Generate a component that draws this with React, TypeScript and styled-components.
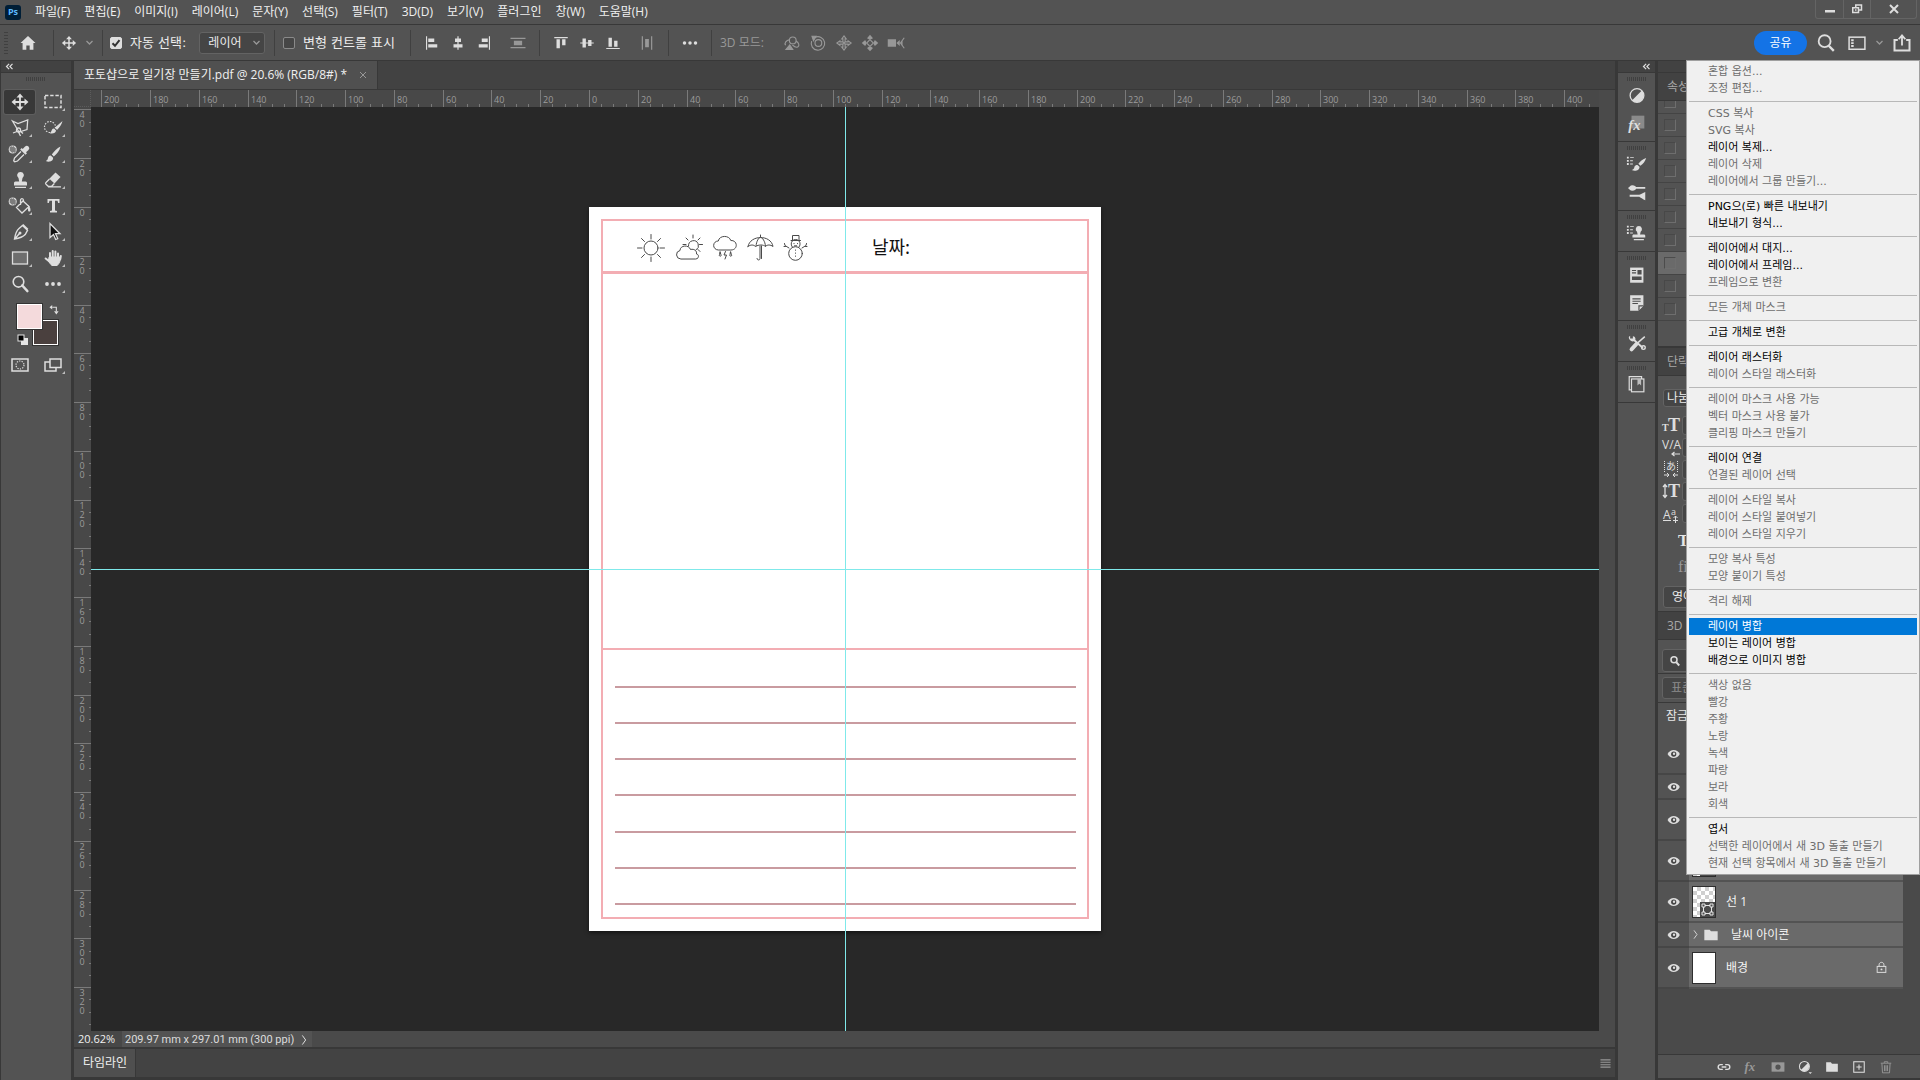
import React from "react";
import styled, { createGlobalStyle, css } from "styled-components";

const uiFont = `"Open Sans", "Noto Sans CJK KR", sans-serif`;
const systemFont = `"DejaVu Sans", "Noto Sans CJK KR", sans-serif`;

const color = {
  panel: "#535353",
  strip: "#424242",
  edge: "#383838",
  track: "#4a4a4a",
  canvas: "#282828",
  icon: "#dedede",
  dim: "#989898",
  row: "#6a6a6a",
  pink: "#f3adb3",
};

const GlobalStyle = createGlobalStyle`
  *, *::before, *::after { box-sizing: border-box; }
  body { margin: 0; background: ${color.panel}; overflow: hidden; }
  button, input, select { font: inherit; color: inherit; margin: 0; }
  ul { list-style: none; margin: 0; padding: 0; }
`;

const Shell = styled.div`
  display: flex;
  flex-direction: column;
  height: 100vh;
  background: ${color.panel};
  color: #e6e6e6;
  font: 12px/16px ${uiFont};
`;

const plainButton = css`
  display: flex;
  align-items: center;
  justify-content: center;
  padding: 0;
  border: 0;
  background: none;
`;

const Svg = styled.svg<{ $size: number; $dim?: boolean }>`
  display: block;
  flex: none;
  width: ${(p) => p.$size}px;
  height: ${(p) => p.$size}px;
  color: ${(p) => (p.$dim ? color.dim : color.icon)};
  fill: none;
  stroke: none;
`;

/* ---------- icons, all on a 24 unit grid ---------- */

const line = { stroke: "currentColor", strokeWidth: 1.5, fill: "none" } as const;
const solid = { fill: "currentColor" } as const;

const Checker = () => (
  <g>
    <circle cx="4.7" cy="7.5" r="4" fill="currentColor" />
    <path
      d="M2.7 4.5h1v1h-1zM4.7 4.5h1v1h-1zM3.7 5.5h1v1h-1zM5.7 5.5h1v1h-1zM1.7 5.5h1v1h-1zM2.7 6.5h1v1h-1zM4.7 6.5h1v1h-1zM6.7 6.5h1v1h-1zM3.7 7.5h1v1h-1zM5.7 7.5h1v1h-1zM1.7 7.5h1v1h-1zM2.7 8.5h1v1h-1zM4.7 8.5h1v1h-1zM6.7 8.5h1v1h-1zM3.7 9.5h1v1h-1zM5.7 9.5h1v1h-1z"
      fill="#1c1c1c"
    />
  </g>
);

const Bullets = () => (
  <path d="M1 4h2v2H1zM4.500 4.500h4v1h-4zM1 7.500h2v2H1zM4.500 8h3v1h-3zM1 11h2v2H1zM4.500 11.500h3v1h-3z" {...solid} />
);

const icons: Record<string, React.ReactNode> = {
  move: (
    <g>
      <path d="M12 5v14M5 12h14" {...line} strokeWidth={1.8} />
      <path d="M12 3.500l3.500 4h-7zM12 20.500l3.500-4h-7zM3.500 12l4-3.500v7zM20.500 12l-4-3.500v7z" {...solid} />
    </g>
  ),
  marquee: <rect x="4" y="5.500" width="16" height="12" {...line} strokeDasharray="3.400 1.800" />,
  lasso: (
    <g {...line} strokeWidth={1.3}>
      <path d="M4.500 5l5.500 2.500L19.700 4 19 13.500l-8 2.500z" />
      <circle cx="10.500" cy="14" r="2" />
      <path d="M9 15.500l-4 1.500M10.500 16l2 4M12 15l3 2.500" />
    </g>
  ),
  quickSelect: (
    <g>
      <circle cx="9" cy="11" r="5.500" {...line} strokeWidth={1.2} strokeDasharray="1.500 1.300" />
      <path d="M21.500 5l-7.500 6.500 2 2.500c2.500-2.500 4.500-5 5.500-9zM13 12.500c-2 0-2.300 1.800-2.600 2.800-.2.900-.9 1.400-1.900 1.700 2.500 1.300 6.500.2 6.500-2.500z" {...solid} />
    </g>
  ),
  eyedropper: (
    <g>
      <Checker />
      <path d="M20.500 4.500a2.400 2.400 0 0 0-3.400 0L14.700 7l-1-1-1.500 1.500 5.300 5.300 1.500-1.500-1-1 2.500-2.400a2.400 2.400 0 0 0 0-3.400z" {...solid} />
      <path d="M13 9.500l-6.500 6.500-.8 2.800 1 1 2.800-.8 6.500-6.500" {...line} strokeWidth={1.3} />
    </g>
  ),
  brush: (
    <path d="M19.500 4.500c-3.500 1.500-6.500 5-8.700 8l2 2c3-2.300 5.700-5.500 6.700-10zM9.800 13.500c-2.300 0-2.700 1.800-3 3.300-.2 1-.9 1.700-2 2.200 3 1.500 7.500.3 7.300-3.300z" {...solid} />
  ),
  stamp: (
    <path d="M12.500 4a3.300 3.300 0 0 0-2 6l.7 3.500H7.500c-1 0-1.500.8-1.500 1.500v2.500h13V15c0-.7-.5-1.500-1.500-1.500h-3.700l.7-3.500a3.300 3.300 0 0 0-2-6zM7 18.700h11V20H7z" {...solid} />
  ),
  eraser: (
    <g>
      <path d="M14.500 4.500l5 4.500-6 6.500-5.200-4.700z" {...solid} />
      <path d="M8.500 11l-3.500 3.500c-.6.600-.6 1.200 0 1.800L7.500 18.500h3L13.300 15.500M7 18.900h13" {...line} strokeWidth={1.3} />
    </g>
  ),
  bucket: (
    <g>
      <Checker />
      <path d="M8.500 13.500L15 7l6 5.500-7 6.500zM12.500 11V6.500c0-2.500 3-2.500 3 0V8" {...line} strokeWidth={1.3} />
      <path d="M20 11c1.500 1 2.500 3 2.500 5s-2.500 2-2.500 0z" {...solid} />
    </g>
  ),
  type: <path d="M6.500 5h12v4h-1.300l-.7-2.300h-2.500v9.800l2 .5v1.500H9V17l2-.5V6.700H8.500L7.800 9H6.500z" {...solid} />,
  pen: (
    <g>
      <path d="M14.500 5.500l5 4.800-2.300 4.200c-2.500 2.700-5.700 3.700-10.700 4.500.8-5 1.800-8.200 4.500-10.500zM6.500 19l5-5.500" {...line} strokeWidth={1.4} />
      <circle cx="12" cy="13" r="1.500" {...solid} />
      <path d="M15.300 4l5 4.800-1.200 1.400-5-4.800z" {...solid} />
    </g>
  ),
  pathSelect: <path d="M9 3.500v14l3.500-3 2.200 5 2-.9-2.200-4.900h4.500z" fill="#101010" stroke="currentColor" strokeWidth="1.300" />,
  rectangle: <rect x="4.500" y="6" width="15" height="12" fill="#6e6e6e" stroke="currentColor" strokeWidth="1.300" />,
  hand: (
    <g stroke="currentColor" strokeLinecap="round" fill="currentColor">
      <path d="M9 12V7M11.700 11V5M14.400 11V5.500M17 12.500V7.500M19.300 13l.5-3M9 16l-4.300-3.500" strokeWidth="2" />
      <path d="M8.500 11h10.300l.5 3c-.8 3-2.300 5-3.300 5.500h-5c-2-1.500-2.500-3-3.500-4.500z" strokeWidth="1" />
    </g>
  ),
  zoom: (
    <g>
      <circle cx="10.500" cy="9.800" r="5.300" {...line} strokeWidth={1.600} />
      <path d="M14.300 13.500l5 5.500" stroke="currentColor" strokeWidth="2.600" strokeLinecap="round" />
    </g>
  ),
  dots: (
    <g {...solid}>
      <circle cx="6" cy="12" r="1.900" />
      <circle cx="12" cy="12" r="1.900" />
      <circle cx="18" cy="12" r="1.900" />
    </g>
  ),
  quickMask: (
    <g>
      <rect x="4" y="6" width="16" height="12" {...line} />
      <circle cx="12" cy="12" r="4" {...line} strokeWidth={1.200} strokeDasharray="1.300 1.200" />
    </g>
  ),
  screenMode: (
    <g {...line}>
      <path d="M9 9H4v9h11v-3" />
      <rect x="9" y="6" width="11" height="8.500" />
    </g>
  ),
  home: <path d="M12 3.500L3 12h2.500v8H10v-5h4v5h4.500v-8H21z" {...solid} />,
  chevronDown: <path d="M4 8l8 8 8-8" {...line} strokeWidth={3.400} />,
  alignLeft: <path d="M4 3h1.500v18H4zM7 6h8v4.500H7zM7 13.500h12V18H7z" {...solid} />,
  alignCenter: <path d="M11.200 3h1.600v3H16v4.500h-3.200v3H18V18h-5.200v3h-1.600v-3H6v-4.500h5.200v-3H8V6h3.200z" {...solid} />,
  alignRight: <path d="M18.500 3H20v18h-1.500zM9 6h8v4.500H9zM5 13.500h12V18H5z" {...solid} />,
  distributeV: <path d="M2 5h20v1.600H2zM2 17.400h20V19H2zM6.500 9h11v6h-11z" {...solid} />,
  alignTop: <path d="M3 4h18v1.500H3zM6 7h4.500v12H6zM13.500 7H18v8h-4.500z" {...solid} />,
  alignMiddle: <path d="M3 11.200h3V6h4.500v5.200h3V8H18v3.200h3v1.600h-3V16h-4.500v-3.200h-3V18H6v-5.200H3z" {...solid} />,
  alignBottom: <path d="M3 18.500h18V20H3zM6 5h4.500v12H6zM13.500 9H18v8h-4.500z" {...solid} />,
  distributeH: <path d="M5 3h1.600v18H5zM17.400 3H19v18h-1.600zM9.500 6.500h5v11h-5z" {...solid} />,
  orbit: (
    <g {...line}>
      <circle cx="13" cy="8.500" r="4.500" />
      <path d="M9 7.500c-5 1-7.500 4.500-5.500 7.500M17.500 9.500c4 2 4.500 6 2.500 7.500-2 1.300-5 0-7.500-2.500" />
      <path d="M4 20.500h9l-4-6z" {...solid} />
    </g>
  ),
  roll: (
    <g {...line}>
      <circle cx="12.500" cy="12" r="4.500" />
      <path d="M8 4.500a9 9 0 1 1-4.500 5" />
      <path d="M4 3l5.500 0-3.500 6z" {...solid} />
    </g>
  ),
  pan3d: (
    <g {...line}>
      <path d="M12 2.500l3 4h-1.500v4h4V9l4 3-4 3v-1.500h-4v4H15l-3 4-3-4h1.500v-4h-4V15l-4-3 4-3v1.500h4v-4H9z" />
      <path d="M10.500 10.500l3 3M13.500 10.500l-3 3" />
    </g>
  ),
  slide3d: (
    <g>
      <path d="M12 7.500L16.500 12 12 16.500 7.500 12z" {...line} />
      <path d="M12 1l4 4.500-2.500 1.500h-3L8 5.500zM12 23l4-4.500-2.500-1.500h-3L8 18.500zM1 12l4.500-4L7 10.500v3L5.500 16zM23 12l-4.500-4L17 10.500v3l1.500 2.500z" {...solid} />
    </g>
  ),
  camera3d: (
    <g>
      <path d="M1 7h11v10H1zM12.500 12L17 8v8z" {...solid} />
      <path d="M23 5l-5 7 5 7M20 8.500v7" {...line} />
    </g>
  ),
  search: (
    <g>
      <circle cx="10.500" cy="10" r="6.500" {...line} strokeWidth={2} />
      <path d="M15 15l5.500 5.500" stroke="currentColor" strokeWidth="2.600" />
    </g>
  ),
  workspace: (
    <g>
      <rect x="2.500" y="5" width="19" height="14.500" {...line} strokeWidth={1.800} />
      <path d="M5 7.500h3v2.300H5zM5 11h3v2.300H5zM5 14.500h3v2.300H5z" {...solid} />
    </g>
  ),
  exportUp: (
    <g>
      <path d="M7 8.500H3V21h18V8.500h-4" {...line} strokeWidth={2.400} />
      <path d="M12 15V4M8 7.500l4-4.500 4 4.500" {...line} strokeWidth={2.200} />
    </g>
  ),
  adjustments: (
    <g>
      <circle cx="12" cy="12.500" r="7.500" {...line} strokeWidth={1.400} />
      <path d="M17.300 7.200A7.500 7.500 0 0 1 6.700 17.800z" {...solid} />
    </g>
  ),
  styles: (
    <g>
      <rect x="6" y="4" width="14" height="14" fill="#8a8a8a" />
      <text x="2.500" y="20" fontFamily="Liberation Serif, serif" fontStyle="italic" fontWeight="bold" fontSize="16" fill="currentColor">
        fx
      </text>
    </g>
  ),
  brushSettings: (
    <g>
      <Bullets />
      <path d="M22 5.500c-3.500 1-6.500 3.700-8.500 6.300l2.200 2.200c3-2 5.300-5 6.300-8.500zM12.500 13c-3 0-3.200 2-3.700 3.500-.4 1-1.300 1.500-2.600 2 3.500 2 8.800.5 8.500-3.500z" {...solid} />
    </g>
  ),
  brushes: (
    <path d="M2 7.500c1.500-.5 2.500-3 5-3s3.500 1.200 4 2h10v2H11c-.5 1-1.500 2-4 2s-3.500-2-5-3zM4 15h10.500c2-.5 4-2 6.500-3v9c-2.500-1-4.500-2.500-6.500-3.800H4z" {...solid} />
  ),
  cloneSource: (
    <g>
      <Bullets />
      <path d="M14 4.500a3.300 3.300 0 0 0-2 6l.7 3H8.500c-1 0-1.500.7-1.500 1.400v2.100h14v-2.100c0-.7-.5-1.400-1.500-1.400h-4.200l.7-3a3.300 3.300 0 0 0-2-6zM8.500 18.500h11v1.400h-11z" {...solid} />
    </g>
  ),
  libraries: (
    <g>
      <rect x="4.500" y="5" width="14.500" height="16.500" {...solid} />
      <path d="M6.500 7.500H11v1.300H6.500zM6.500 10.200H11v1.300H6.500zM12.500 7.500H17v5h-4.500zM6.500 14.800H17v3.700H6.500z" fill="#4f4f4f" />
    </g>
  ),
  notes: (
    <g>
      <path d="M4.500 4.500H19V16l-5.500 5.500h-9z" {...solid} />
      <path d="M7 8h9v1.200H7zM7 10.500h9v1.200H7zM7 13h6v1.200H7zM13.500 21.500v-6h6z" fill="#4f4f4f" />
      <path d="M14.800 20.500v-3.700h3.700z" {...solid} />
    </g>
  ),
  toolPresets: (
    <g>
      <path d="M8.500 8.500l10 9" {...line} strokeWidth={2} />
      <circle cx="19" cy="17" r="2" {...line} strokeWidth={1.500} />
      <path d="M3 5.500l1.500-1.500v3h3V4.500c2 0 3 1.500 2.800 3.500-.3 1.500-1.500 2.300-3 2.300C5 10.300 3 8 3 5.500z" {...solid} />
      <path d="M20.500 5l-9 8" {...line} strokeWidth={1.600} />
      <path d="M11.500 13l-5.500 6" stroke="currentColor" strokeWidth="4.200" strokeLinecap="round" />
    </g>
  ),
  book: (
    <g>
      <path d="M6 18.500H3.500V4H17v2.500" {...line} strokeWidth={1.300} />
      <rect x="6" y="6.500" width="13.500" height="14" {...line} strokeWidth={1.300} />
      <path d="M12.500 6.500h4v7l-2-1.800-2 1.800z" fill="#bdbdbd" />
    </g>
  ),
  eye: (
    <g>
      <path d="M1 12c4.500-9 16.500-9 21 0-4.500 9-16.500 9-21 0z" {...solid} />
      <circle cx="11.500" cy="12" r="4.500" fill="#454545" />
      <circle cx="12" cy="11.500" r="2" {...solid} />
    </g>
  ),
  folder: <path d="M2 4h8l2 2.500h10V20H2z" {...solid} />,
  chevronRight: <path d="M8 1l8 11-8 11" {...line} strokeWidth={2.400} />,
  lock: (
    <g>
      <rect x="4" y="10" width="16" height="11" {...line} strokeWidth={1.800} />
      <path d="M7.500 10V7c0-6 9-6 9 0v3" {...line} strokeWidth={1.800} />
      <circle cx="12" cy="15.500" r="1.800" {...solid} />
    </g>
  ),
  link: (
    <g {...line} strokeWidth={2.400}>
      <path d="M10 8H6a4 4 0 0 0 0 8h4M14 8h4a4 4 0 0 1 0 8h-4M8 12h8" />
    </g>
  ),
  fx: (
    <text x="1" y="18" fontFamily="Liberation Serif, serif" fontStyle="italic" fontWeight="bold" fontSize="22" fill="currentColor">
      fx
    </text>
  ),
  mask: (
    <g>
      <rect x="1" y="4" width="22" height="16" {...solid} />
      <circle cx="12" cy="12" r="4.500" fill="#535353" />
    </g>
  ),
  adjust: (
    <g>
      <circle cx="11" cy="11" r="8.500" {...line} strokeWidth={1.800} />
      <path d="M17 5A8.500 8.500 0 0 1 5 17zM18 21h6l-3 3z" {...solid} />
    </g>
  ),
  plusBox: (
    <g {...line} strokeWidth={1.800}>
      <rect x="3" y="3" width="18" height="18" />
      <path d="M12 7.500v9M7.500 12h9" />
    </g>
  ),
  trash: (
    <g {...line} strokeWidth={1.600}>
      <path d="M3 5.500h18M9 5V3h6v2M5 6l1 16h12l1-16M9.500 9v10M12 9v10M14.500 9v10" />
    </g>
  ),
  swap: (
    <g>
      <path d="M7 7h9v9" {...line} strokeWidth={2.400} />
      <path d="M1 7l6-5v10zM16 23l-5-7h10z" {...solid} />
    </g>
  ),
  searchBold: (
    <g>
      <circle cx="10" cy="9.500" r="6" {...line} strokeWidth={3} />
      <path d="M14.500 14.500l6 6.500" stroke="currentColor" strokeWidth="3.800" />
    </g>
  ),
  minimize: <path d="M2 14h20v5H2z" {...solid} />,
  restore: (
    <g {...line} strokeWidth={3}>
      <path d="M9.500 8V4H21v10h-5" />
      <path d="M3.500 9.500H15V19H3.500zM8 14h3" />
    </g>
  ),
  close: <path d="M4 4l16 16M20 4L4 20" {...line} strokeWidth={4} />,
  cross: <path d="M3 3l18 18M21 3L3 21" {...line} strokeWidth={3} />,
  collapse: <path d="M11 5l-7 7 7 7M20 5l-7 7 7 7" {...line} strokeWidth={3.200} />,
  burger: <path d="M1 4h22M1 9.300h22M1 14.600h22M1 20h22" {...line} strokeWidth={2.400} />,
};

const Icon = ({ name, size = 24, dim = false }: { name: string; size?: number; dim?: boolean }) => (
  <Svg $size={size} $dim={dim} viewBox="0 0 24 24" aria-hidden="true">
    {icons[name]}
  </Svg>
);

/* ---------- menu bar ---------- */

const MenuBar = styled.header`
  display: flex;
  flex: none;
  height: 25px;
  border-bottom: 1px solid ${color.edge};
`;

const Logo = styled.div`
  align-self: center;
  width: 16px;
  height: 15px;
  margin: 0 14px 0 5px;
  border-radius: 3px;
  background: #001e36;
  color: #5cb8ff;
  font: bold 9px/14px ${uiFont};
  text-align: center;
`;

const MenuNav = styled.nav`
  display: flex;
  flex: 1;
  gap: 14px;
`;

const MenuButton = styled.button`
  ${plainButton}
  color: #f0f0f0;
`;

const WindowControls = styled.div`
  display: flex;
  height: 19px;
  margin-right: 3px;
  border: 1px solid #646464;
  border-top: 0;
  border-radius: 0 0 3px 3px;
`;

const WindowButton = styled.button<{ $wide?: boolean }>`
  ${plainButton}
  width: ${(p) => (p.$wide ? 46 : 27)}px;
  & + & {
    border-left: 1px solid #646464;
  }
`;

const menus = ["파일(F)", "편집(E)", "이미지(I)", "레이어(L)", "문자(Y)", "선택(S)", "필터(T)", "3D(D)", "보기(V)", "플러그인", "창(W)", "도움말(H)"];

/* ---------- options bar ---------- */

const OptionsBar = styled.div`
  display: flex;
  flex: none;
  align-items: center;
  height: 36px;
  border-bottom: 1px solid ${color.edge};
`;

const OptionGroup = styled.div<{ $width: number; $gap?: number; $start?: number }>`
  display: flex;
  align-items: center;
  width: ${(p) => p.$width}px;
  height: 26px;
  padding-left: ${(p) => p.$start ?? 8}px;
  gap: ${(p) => p.$gap ?? 8}px;
  border-right: 1px solid #404040;
`;

const OptionTail = styled.div`
  display: flex;
  flex: 1;
  align-items: center;
  gap: 8px;
  padding: 0 8px;
  color: ${color.dim};
`;

const ModeIcons = styled.div`
  display: flex;
  gap: 8px;
  padding-left: 11px;
`;

const Grip = styled.div`
  width: 4px;
  height: 22px;
  background: repeating-linear-gradient(#404040 0 1px, transparent 1px 3px);
`;

const IconButton = styled.button<{ $after?: number }>`
  ${plainButton}
  margin-right: ${(p) => p.$after ?? 0}px;
`;

const CheckLabel = styled.label`
  display: flex;
  align-items: center;
  gap: 8px;
  color: #ececec;
  font: 13px/16px ${systemFont};
  white-space: nowrap;
`;

const CheckBox = styled.input`
  appearance: none;
  width: 12px;
  height: 12px;
  border: 1px solid #8a8a8a;
  border-radius: 2px;
  background: #464646;
  &:checked {
    border-color: #dedede;
    background: #dedede;
  }
`;

const CheckHolder = styled.span`
  display: grid;
  & > * {
    grid-area: 1 / 1;
  }
  & > svg {
    pointer-events: none;
    color: #333;
  }
`;

const SelectHolder = styled.span<{ $width: number }>`
  display: grid;
  align-items: center;
  width: ${(p) => p.$width}px;
  height: 22px;
  & > * {
    grid-area: 1 / 1;
  }
  & > svg {
    justify-self: end;
    margin-right: 4px;
    pointer-events: none;
  }
`;

const SelectBox = styled.select<{ $dim?: boolean }>`
  appearance: none;
  width: 100%;
  height: 22px;
  padding: 0 8px;
  border: 1px solid #636363;
  border-radius: 3px;
  background: #454545;
  color: ${(p) => (p.$dim ? "#8c8c8c" : "#ececec")};
`;

const ShareButton = styled.button`
  ${plainButton}
  width: 53px;
  height: 24px;
  border-radius: 12px;
  background: #1473e6;
  color: #fff;
`;

const Spacer = styled.div`
  flex: 1;
`;

/* ---------- body ---------- */

const Body = styled.div`
  position: relative;
  display: flex;
  flex: 1;
  min-height: 0;
`;

const DockHeader = styled.div<{ $end?: boolean }>`
  display: flex;
  flex: none;
  align-items: center;
  justify-content: ${(p) => (p.$end ? "flex-end" : "flex-start")};
  height: 12px;
  padding: 0 4px;
  border-bottom: 1px solid ${color.edge};
  background: ${color.strip};
`;

const RidgeGrip = styled.div`
  width: 20px;
  height: 4px;
  margin: 4px auto 0;
  background: repeating-linear-gradient(90deg, #404040 0 1px, transparent 1px 2px);
`;

const ToolPanel = styled.aside`
  display: flex;
  flex: none;
  flex-direction: column;
  width: 74px;
  border-left: 1px solid ${color.edge};
  border-right: 3px solid ${color.edge};
`;

const ToolGrid = styled.div`
  display: grid;
  grid-template-columns: 31px 31px;
  gap: 2px;
  padding: 9px 3px 0;
`;

const ToolButton = styled.button<{ $active?: boolean }>`
  ${plainButton}
  height: 24px;
  border-radius: 2px;
  ${(p) => p.$active && "background: #383838; box-shadow: 0 0 0 1px #5e5e5e;"}
`;

const Swatches = styled.div`
  display: grid;
  grid-template-columns: 16px 9px 16px;
  grid-template-rows: 16px 9px 16px;
  margin: 8px 0 0 16px;
`;

const Swatch = styled.button<{ $color: string; $front?: boolean }>`
  grid-area: ${(p) => (p.$front ? "1 / 1 / 3 / 3" : "2 / 2 / 4 / 4")};
  z-index: ${(p) => (p.$front ? 1 : 0)};
  padding: 0;
  border: 1px solid #fff;
  outline: 1px solid #333;
  outline-offset: 0;
  background: ${(p) => p.$color};
`;

const SwapCell = styled.button`
  ${plainButton}
  grid-area: 1 / 3 / 2 / 4;
  align-items: flex-start;
  justify-content: flex-end;
  margin-right: -2px;
`;

const DefaultCell = styled.button`
  ${plainButton}
  grid-area: 3 / 1 / 4 / 2;
  align-items: flex-end;
  justify-content: flex-start;
`;

const ModeRow = styled.div`
  display: grid;
  grid-template-columns: 31px 31px;
  gap: 2px;
  padding: 8px 3px 0;
`;

const tools: [string, string][] = [
  ["move", "이동 도구"],
  ["marquee", "사각형 선택 윤곽 도구"],
  ["lasso", "다각형 올가미 도구"],
  ["quickSelect", "빠른 선택 도구"],
  ["eyedropper", "스포이드 도구"],
  ["brush", "브러시 도구"],
  ["stamp", "복제 도장 도구"],
  ["eraser", "지우개 도구"],
  ["bucket", "페인트 통 도구"],
  ["type", "문자 도구"],
  ["pen", "펜 도구"],
  ["pathSelect", "패스 선택 도구"],
  ["rectangle", "사각형 도구"],
  ["hand", "손 도구"],
  ["zoom", "돋보기 도구"],
  ["dots", "도구 모음 편집"],
];

const noFlyout = ["move", "zoom", "quickMask"];

const ToolIcon = ({ name }: { name: string }) => (
  <Svg $size={24} viewBox="0 0 24 24" overflow="visible" aria-hidden="true">
    {icons[name]}
    {!noFlyout.includes(name) && <path d="M24 18v3h-3z" fill="#bdbdbd" />}
  </Svg>
);

/* ---------- document ---------- */

const DocumentColumn = styled.main`
  display: flex;
  flex: 1;
  flex-direction: column;
  min-width: 0;
`;

const TabRow = styled.div`
  display: flex;
  flex: none;
  height: 29px;
  border-bottom: 1px solid ${color.edge};
  background: ${color.strip};
`;

const DocumentTab = styled.div`
  display: flex;
  align-items: center;
  gap: 12px;
  padding: 0 10px;
  border-right: 1px solid ${color.edge};
  background: #505050;
  color: #f0f0f0;
  white-space: nowrap;
`;

const WorkArea = styled.div`
  display: grid;
  flex: 1;
  grid-template-columns: 17px 1fr 16px;
  grid-template-rows: 17px 1fr;
  min-height: 0;
`;

const RulerCorner = styled.div`
  border-right: 1px dotted #5c5c5c;
  border-bottom: 1px dotted #5c5c5c;
  background: #484848;
`;

const Ruler = styled.div`
  display: flex;
  align-items: center;
  justify-content: center;
  min-width: 0;
  min-height: 0;
  overflow: hidden;
  background: #484848;
  & > svg {
    display: block;
    flex: none;
  }
`;

const ScrollTrack = styled.div`
  background: ${color.track};
`;

const Canvas = styled.div`
  position: relative;
  display: flex;
  align-items: center;
  justify-content: center;
  min-height: 0;
  overflow: hidden;
  background: ${color.canvas};
`;

const Guide = styled.div<{ $vertical?: boolean }>`
  position: absolute;
  background: #7fe9ea;
  ${(p) => (p.$vertical ? "top: 0; bottom: 0; left: 50%; width: 1px;" : "left: 0; right: 0; top: 50%; height: 1px;")}
`;

const Page = styled.article`
  display: flex;
  flex: none;
  width: 512px;
  height: 724px;
  padding: 12px;
  background: #fff;
  box-shadow: 0 2px 4px rgba(0, 0, 0, 0.5);
`;

const DiaryFrame = styled.div`
  display: flex;
  flex: 1;
  flex-direction: column;
  border: 2px solid ${color.pink};
`;

const DiaryHeader = styled.div`
  display: grid;
  grid-template-columns: 1fr 1fr;
  align-items: center;
  height: 53px;
  border-bottom: 3px solid ${color.pink};
`;

const WeatherRow = styled.div`
  display: flex;
  gap: 8px;
  padding: 4px 0 0 34px;
`;

const DateLabel = styled.div`
  padding-left: 27px;
  color: #111;
  font: 18px/24px "Noto Sans CJK KR", sans-serif;
`;

const PictureArea = styled.div`
  height: 376px;
  border-bottom: 2px solid ${color.pink};
`;

const WritingArea = styled.div`
  display: flex;
  flex: 1;
  flex-direction: column;
  justify-content: space-between;
  padding: 36px 11px 12px 12px;
`;

const WritingLine = styled.div`
  height: 2px;
  background: #c99ba0;
`;

const StatusBar = styled.div`
  display: flex;
  flex: none;
  align-items: center;
  height: 18px;
  border-bottom: 2px solid ${color.edge};
  background: ${color.track};
  font: 11px/16px ${uiFont};
`;

const ZoomInput = styled.input`
  width: 48px;
  height: 16px;
  padding: 0 4px;
  border: 0;
  background: #474747;
  color: #f0f0f0;
`;

const DocInfo = styled.button`
  ${plainButton}
  gap: 5px;
  height: 16px;
  padding: 1px 3px 0;
  background: ${color.panel};
  color: #dcdcdc;
  font-family: Roboto, sans-serif;
`;

const TimelinePanel = styled.div`
  display: flex;
  flex: none;
  align-items: center;
  height: 31px;
  padding-right: 4px;
  border-bottom: 3px solid ${color.edge};
  background: #434343;
`;

const TimelineTab = styled.button`
  ${plainButton}
  align-self: stretch;
  padding: 0 8px 0 9px;
  border-right: 1px solid ${color.edge};
  background: #4f4f4f;
  color: #f0f0f0;
`;

/* Screen pixels covered by one millimetre of the page at 20.6% zoom. */
const pxPerMm = 512 / 210;
const marks = (from: number, to: number) => Array.from({ length: (to - from) / 5 + 1 }, (_, i) => from + i * 5);

const HorizontalRuler = () => {
  const width = 1508;
  const origin = width / 2 - 256;
  return (
    <svg width={width} height="17" fontFamily="Open Sans, sans-serif" fontSize="9" fill="#9c9c9c" aria-hidden="true">
      {marks(-200, 410).map((mm) => {
        const x = Math.round(origin + mm * pxPerMm);
        const major = mm % 20 === 0;
        return (
          <g key={mm}>
            <rect x={x} y={major ? 0 : 14} width="1" height={major ? 17 : 3} fill="#7a7a7a" />
            {major && (
              <text x={x + 3} y="13">
                {Math.abs(mm)}
              </text>
            )}
          </g>
        );
      })}
    </svg>
  );
};

const VerticalRuler = () => {
  const height = 924;
  const origin = height / 2 - 362;
  return (
    <svg width="17" height={height} fontFamily="Open Sans, sans-serif" fontSize="9" fill="#9c9c9c" textAnchor="middle" aria-hidden="true">
      {marks(-40, 335).map((mm) => {
        const y = Math.round(origin + mm * pxPerMm);
        const major = mm % 20 === 0;
        return (
          <g key={mm}>
            <rect x={major ? 0 : 15} y={y} width={major ? 17 : 2} height="1" fill="#7a7a7a" />
            {major && (
              <text>
                {String(Math.abs(mm))
                  .split("")
                  .map((digit, i) => (
                    <tspan key={i} x="8" y={y + 9 + i * 9}>
                      {digit}
                    </tspan>
                  ))}
              </text>
            )}
          </g>
        );
      })}
    </svg>
  );
};

const WeatherSvg = styled.svg`
  width: 28px;
  height: 28px;
  fill: none;
  stroke: #4a4a4a;
  stroke-width: 1;
  stroke-linecap: round;
  stroke-linejoin: round;
`;

const weather: [string, React.ReactNode][] = [
  [
    "맑음",
    <g key="sun">
      <circle cx="14" cy="14" r="7" />
      <path d="M14 .5v4.500M14 23v4.500M.5 14H5M23 14h4.500M4.500 4.500l3 3M20.500 20.500l3 3M4.500 23.500l3-3M20.500 7.500l3-3" />
    </g>,
  ],
  [
    "구름 조금",
    <g key="partly" transform="translate(1 0)">
      <path d="M6.500 25a4.300 4.300 0 0 1-.5-8.500c0-5.500 9-6 10.500-1 4-1 6.500 1.500 6 4.500 3 .5 2.500 5-.5 5z" />
      <path d="M14.500 12a5 5 0 1 1 7.500 4M19 1v3M12 4l2 2M26 4l-2 2M9 10.500h3M25.500 10.500h3M24 15.500l2 2" />
    </g>,
  ],
  [
    "뇌우",
    <g key="storm" transform="translate(2 0)">
      <path d="M7 16a4.500 4.500 0 0 1 .3-9c1-6 11-6 12.500-.5 7-.5 7.500 9.500.5 9.500z" />
      <path d="M9 18l-.5 2.500a1 1 0 1 0 1.500 0zM19.500 18l-.5 2.500a1 1 0 1 0 1.500 0zM14.500 17.500l-1.500 3.500h2.500l-1.500 4" />
    </g>,
  ],
  [
    "우산",
    <g key="umbrella" transform="translate(1 0)">
      <path d="M2 12.500C4 .5 25 .5 27 12.500c-2.500-2-6-2-7.500 0-2-2-7-2-10 0-2-2-5-2-7.500 0zM10 12c.5-5 2.500-8 4.500-9 2 1 4.500 4 5 9M14.500 1v2M14 12v12.500c0 2-3 2-3 0M15.500 12v12.500" />
    </g>,
  ],
  [
    "눈",
    <g key="snow">
      <circle cx="14.500" cy="19.500" r="6.800" />
      <path d="M11.500 13.200a4.500 4.500 0 1 1 6.300 0M11.500 6V1.500h6.500V6M10 6.500h9.500M8 14L4 11.500 3.500 9.500M3 12.500h1.500M21 14l4-2.500.5-2M26 12.500h-1.500M13 9.500v.2M16.500 9.500v.2M13.500 11.800h2.200M14.500 16v.3M14.500 19v.3M14.500 22v.3" />
    </g>,
  ],
];

/* ---------- right docks ---------- */

const IconDock = styled.aside`
  display: flex;
  flex: none;
  flex-direction: column;
  width: 43px;
  border-left: 3px solid ${color.edge};
  border-right: 3px solid ${color.edge};
`;

const DockGroup = styled.div`
  display: flex;
  flex-direction: column;
  align-items: center;
  padding-bottom: 4px;
  border-bottom: 1px solid ${color.edge};
`;

const DockButton = styled.button`
  ${plainButton}
  width: 37px;
  height: 28px;
`;

const dockGroups: [string, string][][] = [
  [["adjustments", "조정"], ["styles", "스타일"]],
  [["brushSettings", "브러시 설정"], ["brushes", "브러시"]],
  [["cloneSource", "복제 원본"]],
  [["libraries", "라이브러리"], ["notes", "메모"]],
  [["toolPresets", "도구 사전 설정"]],
  [["book", "학습"]],
];

const PanelDock = styled.aside`
  display: flex;
  flex: none;
  flex-direction: column;
  width: 262px;
`;

const PanelTabs = styled.div`
  display: flex;
  flex: none;
  align-items: center;
  height: 28px;
  padding: 0 9px;
  border-bottom: 1px solid ${color.edge};
  background: ${color.strip};
  color: #a8a8a8;
`;

const HistoryList = styled.div`
  display: flex;
  flex: none;
  flex-direction: column;
  justify-content: flex-end;
  height: 220px;
  overflow: hidden;
`;

const HistoryRow = styled.div<{ $active?: boolean }>`
  display: flex;
  flex: none;
  align-items: center;
  height: 23px;
  padding-left: 6px;
  border-bottom: 1px solid #444;
  background: ${(p) => (p.$active ? color.row : color.panel)};
`;

const HistoryCheck = styled.input<{ $active?: boolean }>`
  appearance: none;
  width: 12px;
  height: 12px;
  border: 1px solid ${(p) => (p.$active ? "#4c4c4c" : "#484848")};
  border-right-color: #6e6e6e;
  border-bottom-color: #6e6e6e;
`;

const PanelFooter = styled.div`
  flex: none;
  height: 27px;
  border-bottom: 2px solid ${color.edge};
`;

const CharacterPanel = styled.div`
  display: flex;
  flex: none;
  flex-direction: column;
  height: 236px;
  padding: 13px 5px 3px;
  border-bottom: 1px solid ${color.edge};
`;

const FontSelect = styled(SelectBox)`
  flex: none;
  height: 18px;
  margin-bottom: 7px;
  padding: 0 3px;
`;

const LanguageSelect = styled(SelectBox)`
  flex: none;
  margin-top: 6px;
`;

const CharacterRow = styled.div`
  display: grid;
  flex: none;
  grid-template-columns: 19px 1fr;
  align-items: center;
  height: 22px;
`;

const CharacterField = styled.input`
  width: 100%;
  height: 19px;
  border: 1px solid #636363;
  border-radius: 3px;
  background: #454545;
`;

const GlyphStack = styled.div`
  flex: none;
  padding: 4px 0 0 15px;
`;

const GlyphRow = styled.div<{ $dim?: boolean }>`
  height: 26px;
  color: ${(p) => (p.$dim ? color.dim : "#e6e6e6")};
  font: ${(p) => (p.$dim ? "normal" : "bold")} 16px/26px "Liberation Serif", serif;
`;

const glyphIcons: [string, React.ReactNode][] = [
  [
    "글꼴 크기",
    <g key="a" fontFamily="Liberation Serif, serif" fill="currentColor" fontWeight="bold">
      <text x="-1" y="16" fontSize="10">T</text>
      <text x="5" y="16" fontSize="18">T</text>
    </g>,
  ],
  [
    "커닝",
    <g key="b">
      <text x="-1" y="12" fontFamily="Open Sans, sans-serif" fontSize="12" fill="currentColor">V/A</text>
      <path d="M9 17h8M11.500 15L9 17l2.500 2" stroke="currentColor" fill="none" strokeWidth="1.200" />
    </g>,
  ],
  [
    "자간",
    <g key="c">
      <text x="3" y="11" fontFamily="Noto Sans CJK KR, sans-serif" fontSize="10" fill="currentColor">あ</text>
      <path d="M1.500 2v11M14.500 2v11" stroke="currentColor" strokeDasharray="1 1" />
      <path d="M1 16h5M10 16h5M4 14l2 2-2 2M12 14l-2 2 2 2" stroke="currentColor" fill="none" />
    </g>,
  ],
  [
    "세로 비율",
    <g key="d">
      <path d="M2 4v12M0 6l2-2.500L4 6M0 14l2 2.500L4 14" stroke="currentColor" fill="none" strokeWidth="1.300" />
      <text x="5" y="16" fontFamily="Liberation Serif, serif" fontWeight="bold" fontSize="18" fill="currentColor">T</text>
    </g>,
  ],
  [
    "기준선 이동",
    <g key="e">
      <text x="0" y="16" fontFamily="Open Sans, sans-serif" fontSize="12" fill="currentColor">A</text>
      <text x="8" y="12" fontFamily="Open Sans, sans-serif" fontSize="9" fill="currentColor">a</text>
      <path d="M0 17.500h8M12.500 13v7M10.500 15l2-2 2 2M10 17.500h5" stroke="currentColor" fill="none" />
    </g>,
  ],
];

const GlyphSvg = styled.svg`
  width: 18px;
  height: 20px;
  color: #dedede;
  overflow: visible;
`;

const LayerToolRow = styled.div<{ $height: number; $top?: number; $bottom?: number; $lined?: boolean }>`
  display: flex;
  flex: none;
  align-items: center;
  height: ${(p) => p.$height}px;
  padding: ${(p) => p.$top ?? 0}px 4px ${(p) => p.$bottom ?? 0}px;
  ${(p) => p.$lined && `border-bottom: 1px solid ${color.edge};`}
`;

const FilterButton = styled.button`
  ${plainButton}
  justify-content: flex-start;
  flex: 1;
  height: 23px;
  padding-left: 6px;
  border: 1px solid #636363;
  border-radius: 3px;
  background: #454545;
`;

const LockLabel = styled.span`
  padding-left: 4px;
`;

const LayerList = styled.ul`
  display: flex;
  flex: 1;
  flex-direction: column;
  background: ${color.track};
`;

const LayerRow = styled.li<{ $short?: boolean }>`
  display: grid;
  flex: none;
  grid-template-columns: 31px 1fr 17px;
  height: ${(p) => (p.$short ? 25 : 41)}px;
`;

const EyeButton = styled.button`
  ${plainButton}
  border-bottom: 2px solid #464646;
  background: ${color.panel};
`;

const LayerCell = styled.div<{ $tight?: boolean }>`
  display: flex;
  align-items: center;
  gap: ${(p) => (p.$tight ? 3 : 10)}px;
  padding: 0 15px 0 ${(p) => (p.$tight ? 2 : 3)}px;
  border-bottom: 2px solid ${color.panel};
  background: ${color.row};
  color: #f4f4f4;
`;

const LayerName = styled.span<{ $inset?: boolean }>`
  flex: 1;
  padding-left: ${(p) => (p.$inset ? 9 : 0)}px;
`;

const Thumb = styled.div<{ $checker?: boolean }>`
  display: flex;
  align-items: flex-end;
  justify-content: flex-end;
  width: 24px;
  height: 32px;
  border: 1px solid #2e2e2e;
  background: ${(p) => (p.$checker ? "repeating-conic-gradient(#cfcfcf 0 25%, #fff 0 50%) 0 0 / 8px 8px" : "#fff")};
`;

const ShapeBadge = styled.svg`
  display: block;
  width: 15px;
  height: 15px;
  background: #4a4a4a;
`;

const ShapeThumb = () => (
  <Thumb $checker>
    <ShapeBadge viewBox="0 0 15 15" fill="none" stroke="#e6e6e6" aria-hidden="true">
      <rect x="3.500" y="3.500" width="8" height="8" />
      <path d="M2 2h3v3H2zM10 2h3v3h-3zM2 10h3v3H2zM10 10h3v3h-3z" fill="#4a4a4a" />
    </ShapeBadge>
  </Thumb>
);

const LayerFooter = styled.div`
  display: flex;
  flex: none;
  align-items: center;
  justify-content: flex-end;
  gap: 13px;
  height: 26px;
  padding: 0 27px 0 0;
  border-top: 1px solid ${color.edge};
  border-bottom: 2px solid ${color.edge};
`;

/* ---------- context menu ---------- */

const ContextMenu = styled.ul`
  position: absolute;
  top: -1px;
  right: 0;
  width: 234px;
  padding: 2px;
  border: 1px solid #a0a0a0;
  background: #f0f0f0;
  font: 11px/17px ${systemFont};
`;

const MenuItem = styled.button<{ $selected?: boolean }>`
  display: block;
  width: 100%;
  height: 17px;
  padding: 0 0 0 19px;
  border: 0;
  background: ${(p) => (p.$selected ? "#0078d7" : "transparent")};
  color: ${(p) => (p.$selected ? "#fff" : "#000")};
  text-align: left;
  white-space: nowrap;
  &:disabled {
    color: #6d6d6d;
  }
`;

const MenuDivider = styled.li`
  height: 8px;
  padding-top: 4px;
  &::before {
    content: "";
    display: block;
    height: 1px;
    background: #b8b8b8;
  }
`;

/* A leading "-" marks a command that is not available for the current layers. */
const contextGroups = [
  ["-혼합 옵션...", "-조정 편집..."],
  ["-CSS 복사", "-SVG 복사", "레이어 복제...", "-레이어 삭제", "-레이어에서 그룹 만들기..."],
  ["PNG으(로) 빠른 내보내기", "내보내기 형식..."],
  ["레이어에서 대지...", "레이어에서 프레임...", "-프레임으로 변환"],
  ["-모든 개체 마스크"],
  ["고급 개체로 변환"],
  ["레이어 래스터화", "-레이어 스타일 래스터화"],
  ["-레이어 마스크 사용 가능", "-벡터 마스크 사용 불가", "-클리핑 마스크 만들기"],
  ["레이어 연결", "-연결된 레이어 선택"],
  ["-레이어 스타일 복사", "-레이어 스타일 붙여넣기", "-레이어 스타일 지우기"],
  ["-모양 복사 특성", "-모양 붙이기 특성"],
  ["-격리 해제"],
  ["레이어 병합", "보이는 레이어 병합", "배경으로 이미지 병합"],
  ["-색상 없음", "-빨강", "-주황", "-노랑", "-녹색", "-파랑", "-보라", "-회색"],
  ["엽서", "-선택한 레이어에서 새 3D 돌출 만들기", "-현재 선택 항목에서 새 3D 돌출 만들기"],
];

const LayerMenu = () => (
  <ContextMenu role="menu">
    {contextGroups.map((group, g) => (
      <React.Fragment key={g}>
        {g > 0 && <MenuDivider role="separator" />}
        {group.map((entry) => {
          const disabled = entry.startsWith("-");
          const label = disabled ? entry.slice(1) : entry;
          return (
            <li key={entry} role="none">
              <MenuItem role="menuitem" disabled={disabled} $selected={label === "레이어 병합"}>
                {label}
              </MenuItem>
            </li>
          );
        })}
      </React.Fragment>
    ))}
  </ContextMenu>
);

const alignTools: [string, string][] = [["alignLeft", "왼쪽 가장자리 정렬"], ["alignCenter", "수평 중앙 정렬"], ["alignRight", "오른쪽 가장자리 정렬"]];
const verticalTools: [string, string][] = [["alignTop", "위쪽 가장자리 정렬"], ["alignMiddle", "수직 가운데 정렬"], ["alignBottom", "아래쪽 가장자리 정렬"]];
const modes3d: [string, string][] = [["orbit", "3D 궤도"], ["roll", "3D 돌리기"], ["pan3d", "3D 팬"], ["slide3d", "3D 슬라이드"], ["camera3d", "3D 카메라"]];
const layerActions: [string, string, boolean][] = [
  ["link", "레이어 연결", false],
  ["fx", "레이어 스타일", true],
  ["mask", "마스크 추가", true],
  ["adjust", "조정 레이어", false],
  ["folder", "새 그룹", false],
  ["plusBox", "새 레이어", false],
  ["trash", "레이어 삭제", true],
];

export default function App() {
  return (
    <Shell>
      <GlobalStyle />
      <MenuBar>
        <Logo>Ps</Logo>
        <MenuNav>
          {menus.map((m) => (
            <MenuButton key={m}>{m}</MenuButton>
          ))}
        </MenuNav>
        <WindowControls>
          <WindowButton aria-label="최소화"><Icon name="minimize" size={12} /></WindowButton>
          <WindowButton aria-label="이전 크기로"><Icon name="restore" size={12} /></WindowButton>
          <WindowButton $wide aria-label="닫기"><Icon name="close" size={12} /></WindowButton>
        </WindowControls>
      </MenuBar>

      <OptionsBar>
        <OptionGroup $width={54} $start={4} $gap={10}>
          <Grip />
          <IconButton aria-label="홈"><Icon name="home" size={20} /></IconButton>
        </OptionGroup>
        <OptionGroup $width={49} $start={5} $gap={6}>
          <Icon name="move" size={20} />
          <IconButton aria-label="도구 사전 설정"><Icon name="chevronDown" size={9} dim /></IconButton>
        </OptionGroup>
        <OptionGroup $width={172} $start={7} $gap={13}>
          <CheckLabel>
            <CheckHolder>
              <CheckBox type="checkbox" defaultChecked />
              <Svg $size={12} viewBox="0 0 12 12" aria-hidden="true">
                <path d="M2.500 6.200l2.500 2.600 4.500-5.600" stroke="#333" strokeWidth="2" fill="none" />
              </Svg>
            </CheckHolder>
            자동 선택:
          </CheckLabel>
          <SelectHolder $width={66}>
            <SelectBox aria-label="자동 선택 대상">
              <option>레이어</option>
            </SelectBox>
            <Icon name="chevronDown" size={9} dim />
          </SelectHolder>
        </OptionGroup>
        <OptionGroup $width={136}>
          <CheckLabel>
            <CheckBox type="checkbox" />
            변형 컨트롤 표시
          </CheckLabel>
        </OptionGroup>
        <OptionGroup $width={129} $start={12} $gap={8}>
          {alignTools.map(([name, label]) => (
            <IconButton key={name} aria-label={label}><Icon name={name} size={18} /></IconButton>
          ))}
          <Spacer />
          <IconButton aria-label="세로 분포" $after={5}><Icon name="distributeV" size={18} dim /></IconButton>
          <Spacer />
        </OptionGroup>
        <OptionGroup $width={129} $start={12} $gap={8}>
          {verticalTools.map(([name, label]) => (
            <IconButton key={name} aria-label={label}><Icon name={name} size={18} /></IconButton>
          ))}
          <Spacer />
          <IconButton aria-label="가로 분포" $after={5}><Icon name="distributeH" size={18} dim /></IconButton>
          <Spacer />
        </OptionGroup>
        <OptionGroup $width={43} $start={10}>
          <IconButton aria-label="정렬 및 분포"><Icon name="dots" size={22} /></IconButton>
        </OptionGroup>
        <OptionTail>
          <span>3D 모드:</span>
          <ModeIcons>
            {modes3d.map(([name, label]) => (
              <IconButton key={name} aria-label={label} disabled><Icon name={name} size={18} dim /></IconButton>
            ))}
          </ModeIcons>
          <Spacer />
          <ShareButton>공유</ShareButton>
          <IconButton aria-label="검색" $after={2}><Icon name="search" size={22} /></IconButton>
          <IconButton aria-label="작업 영역"><Icon name="workspace" size={20} /></IconButton>
          <IconButton aria-label="작업 영역 선택"><Icon name="chevronDown" size={9} dim /></IconButton>
          <IconButton aria-label="내보내기"><Icon name="exportUp" size={20} /></IconButton>
        </OptionTail>
      </OptionsBar>

      <Body>
        <ToolPanel>
          <DockHeader><Icon name="collapse" size={9} /></DockHeader>
          <RidgeGrip />
          <ToolGrid>
            {tools.map(([name, label]) => (
              <ToolButton key={name} $active={name === "move"} aria-label={label}>
                <ToolIcon name={name} />
              </ToolButton>
            ))}
          </ToolGrid>
          <Swatches>
            <Swatch $front $color="#f4dadc" aria-label="전경색" />
            <Swatch $color="#4a403e" aria-label="배경색" />
            <SwapCell aria-label="색상 전환"><Icon name="swap" size={11} /></SwapCell>
            <DefaultCell aria-label="기본 색상">
              <Svg $size={11} viewBox="0 0 11 11" aria-hidden="true">
                <rect x="4" y="4" width="7" height="7" fill="#e6e6e6" />
                <rect x="1" y="1" width="6" height="6" fill="#000" stroke="#e6e6e6" />
              </Svg>
            </DefaultCell>
          </Swatches>
          <ModeRow>
            <ToolButton aria-label="빠른 마스크"><ToolIcon name="quickMask" /></ToolButton>
            <ToolButton aria-label="화면 모드"><ToolIcon name="screenMode" /></ToolButton>
          </ModeRow>
        </ToolPanel>

        <DocumentColumn>
          <TabRow>
            <DocumentTab>
              <span>포토샵으로 일기장 만들기.pdf @ 20.6% (RGB/8#) *</span>
              <IconButton aria-label="문서 닫기"><Icon name="cross" size={8} dim /></IconButton>
            </DocumentTab>
          </TabRow>
          <WorkArea>
            <RulerCorner />
            <Ruler><HorizontalRuler /></Ruler>
            <ScrollTrack />
            <Ruler><VerticalRuler /></Ruler>
            <Canvas>
              <Page>
                <DiaryFrame>
                  <DiaryHeader>
                    <WeatherRow>
                      {weather.map(([label, drawing]) => (
                        <WeatherSvg key={label} viewBox="0 0 28 28" overflow="visible" role="img" aria-label={label}>
                          {drawing}
                        </WeatherSvg>
                      ))}
                    </WeatherRow>
                    <DateLabel>날짜:</DateLabel>
                  </DiaryHeader>
                  <PictureArea />
                  <WritingArea>
                    {Array.from({ length: 7 }, (_, i) => (
                      <WritingLine key={i} />
                    ))}
                  </WritingArea>
                </DiaryFrame>
              </Page>
              <Guide $vertical />
              <Guide />
            </Canvas>
            <ScrollTrack />
          </WorkArea>
          <StatusBar>
            <ZoomInput aria-label="확대/축소" defaultValue="20.62%" />
            <DocInfo>
              209.97 mm x 297.01 mm (300 ppi)
              <Icon name="chevronRight" size={10} />
            </DocInfo>
          </StatusBar>
          <TimelinePanel>
            <TimelineTab>타임라인</TimelineTab>
            <Spacer />
            <IconButton aria-label="패널 메뉴"><Icon name="burger" size={11} dim /></IconButton>
          </TimelinePanel>
        </DocumentColumn>

        <IconDock>
          <DockHeader $end><Icon name="collapse" size={9} /></DockHeader>
          {dockGroups.map((group, i) => (
            <DockGroup key={i}>
              <RidgeGrip />
              {group.map(([name, label]) => (
                <DockButton key={name} aria-label={label}><Icon name={name} size={22} /></DockButton>
              ))}
            </DockGroup>
          ))}
        </IconDock>

        <PanelDock>
          <DockHeader />
          <PanelTabs>속성</PanelTabs>
          <HistoryList>
            {Array.from({ length: 10 }, (_, i) => (
              <HistoryRow key={i} $active={i === 7}>
                <HistoryCheck type="checkbox" $active={i === 7} aria-label={`작업 내역 ${i + 1}`} />
              </HistoryRow>
            ))}
          </HistoryList>
          <PanelFooter />
          <PanelTabs>단락</PanelTabs>
          <CharacterPanel>
            <FontSelect aria-label="글꼴">
              <option>나눔</option>
            </FontSelect>
            {glyphIcons.map(([label, drawing]) => (
              <CharacterRow key={label}>
                <GlyphSvg viewBox="0 0 18 20" aria-hidden="true">{drawing}</GlyphSvg>
                <CharacterField aria-label={label} />
              </CharacterRow>
            ))}
            <GlyphStack>
              <GlyphRow>T</GlyphRow>
              <GlyphRow $dim>fi</GlyphRow>
            </GlyphStack>
            <LanguageSelect aria-label="언어">
              <option>영어</option>
            </LanguageSelect>
          </CharacterPanel>
          <PanelTabs>3D</PanelTabs>
          <LayerToolRow $height={34} $top={8} $lined>
            <FilterButton aria-label="레이어 필터"><Icon name="searchBold" size={12} /></FilterButton>
          </LayerToolRow>
          <LayerToolRow $height={29} $lined>
            <SelectBox $dim aria-label="혼합 모드">
              <option>표준</option>
            </SelectBox>
          </LayerToolRow>
          <LayerToolRow $height={31} $bottom={6}>
            <LockLabel>잠금</LockLabel>
          </LayerToolRow>
          <LayerList>
            {[false, true, false, false].map((short, i) => (
              <LayerRow key={i} $short={short}>
                <EyeButton aria-label="레이어 가시성"><Icon name="eye" size={14} /></EyeButton>
                <LayerCell>{!short && <ShapeThumb />}</LayerCell>
              </LayerRow>
            ))}
            <LayerRow>
              <EyeButton aria-label="레이어 가시성"><Icon name="eye" size={14} /></EyeButton>
              <LayerCell>
                <ShapeThumb />
                <LayerName>선 1</LayerName>
              </LayerCell>
            </LayerRow>
            <LayerRow $short>
              <EyeButton aria-label="레이어 가시성"><Icon name="eye" size={14} /></EyeButton>
              <LayerCell $tight>
                <Icon name="chevronRight" size={9} />
                <Icon name="folder" size={16} />
                <LayerName $inset>날씨 아이콘</LayerName>
              </LayerCell>
            </LayerRow>
            <LayerRow>
              <EyeButton aria-label="레이어 가시성"><Icon name="eye" size={14} /></EyeButton>
              <LayerCell>
                <Thumb />
                <LayerName>배경</LayerName>
                <Icon name="lock" size={13} />
              </LayerCell>
            </LayerRow>
          </LayerList>
          <LayerFooter>
            {layerActions.map(([name, label, dim]) => (
              <IconButton key={name} aria-label={label}><Icon name={name} size={14} dim={dim} /></IconButton>
            ))}
          </LayerFooter>
        </PanelDock>

        <LayerMenu />
      </Body>
    </Shell>
  );
}
